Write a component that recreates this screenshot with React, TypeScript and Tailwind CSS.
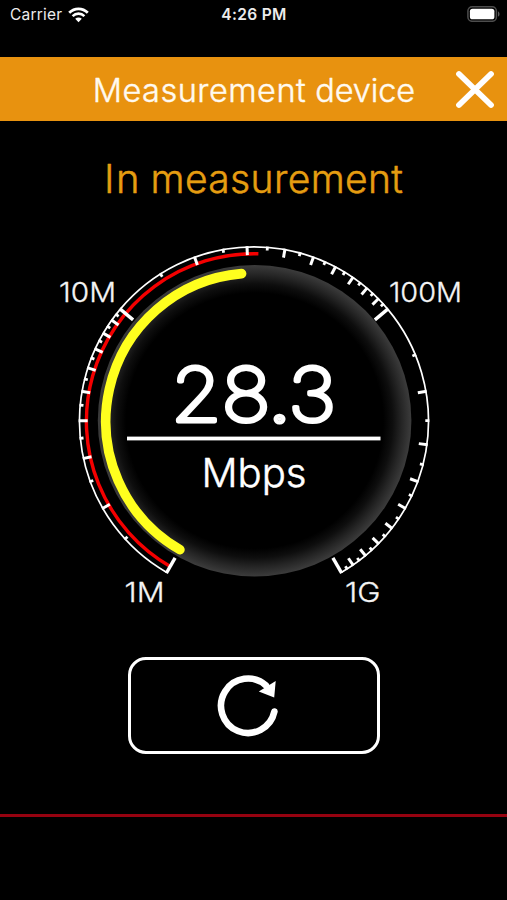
import React from "react";

const CX = 254;
const CY = 421.3;
const R = 174.5;

function point(r: number, deg: number): [number, number] {
  const a = (deg * Math.PI) / 180;
  return [CX + r * Math.sin(a), CY - r * Math.cos(a)];
}

function arc(r: number, from: number, to: number) {
  const [x1, y1] = point(r, from);
  const [x2, y2] = point(r, to);
  return `M${x1} ${y1}A${r} ${r} 0 ${to - from > 180 ? 1 : 0} 1 ${x2} ${y2}`;
}

// Logarithmic scale: three decades, 100 degrees each, starting at -150.
const angleOf = (mbps: number) => -150 + 100 * Math.log10(mbps);

type Tick = { angle: number; length: number; width: number };

const ticks: Tick[] = [];
for (const decade of [1, 10, 100]) {
  for (let half = 2; half < 20; half++) {
    const angle = angleOf((half / 2) * decade);
    if (half === 2) ticks.push({ angle, length: 17.5, width: 3.4 });
    else if (half % 2 === 0) ticks.push({ angle, length: 9, width: 3 });
    else ticks.push({ angle, length: 4, width: 2.8 });
  }
}
ticks.push({ angle: 150, length: 17.5, width: 3.4 });

type WordProps = {
  x: number;
  y: number;
  w: number;
  size: number;
  color?: string;
  stroke?: number;
  spaced?: boolean;
  children: string;
};

// A run of text fitted to the width w, by letter spacing or by stretching the glyphs.
function Word({ x, y, w, size, color = "#f4f4f4", stroke = 0.3, spaced = false, children }: WordProps) {
  return (
    <text
      x={x}
      y={y}
      fontSize={size}
      textLength={w}
      lengthAdjust={spaced ? "spacing" : "spacingAndGlyphs"}
      fill={color}
      stroke={color}
      strokeWidth={stroke}
      strokeLinejoin="round"
      fontWeight={300}
    >
      {children}
    </text>
  );
}

function Gauge() {
  return (
    <svg className="block h-[380px] w-[507px] shrink-0" viewBox="0 235 507 380" fontFamily="Inter, sans-serif">
      <defs>
        <radialGradient id="disk">
          <stop offset="0.82" stopColor="#000" />
          <stop offset="0.88" stopColor="#0e0e0e" />
          <stop offset="0.94" stopColor="#262626" />
          <stop offset="1" stopColor="#3c3c3c" />
        </radialGradient>
      </defs>
      <ellipse cx="254.6" cy="420.7" rx="156.8" ry="155.8" fill="url(#disk)" />
      <path d={arc(167.6, -150, 1.5)} fill="none" stroke="#f40000" strokeWidth="3.4" />
      <path d={arc(R, -150, 150)} fill="none" stroke="#fff" strokeWidth="1.7" />
      {ticks.map((t) => {
        const [x1, y1] = point(R + 0.8, t.angle);
        const [x2, y2] = point(R + 0.8 - t.length, t.angle);
        return <line key={t.angle} x1={x1} y1={y1} x2={x2} y2={y2} stroke="#fff" strokeWidth={t.width} />;
      })}
      <path d={arc(148.2, -150, -4.8)} fill="none" stroke="#ffff1e" strokeWidth="9.6" strokeLinecap="round" />
      <Word x={59} y={301.7} w={57} size={27.5}>10M</Word>
      <Word x={389} y={301.7} w={73} size={27.5}>100M</Word>
      <Word x={124.5} y={601.5} w={40} size={27.5}>1M</Word>
      <Word x={345} y={601.5} w={35.5} size={27.5}>1G</Word>
      <text
        x="171"
        y="420.8"
        fontSize="73.5"
        textLength="165"
        lengthAdjust="spacingAndGlyphs"
        fontWeight={100}
        fill="#fff"
        stroke="#fff"
        strokeWidth="4.8"
        strokeLinejoin="round"
      >
        28<tspan strokeWidth="7">.</tspan>3
      </text>
      <rect x="127" y="436.6" width="253.5" height="3.8" fill="#fff" />
      <Word x={201.5} y={486.5} w={105} size={40} color="#fff" stroke={0.5}>Mbps</Word>
    </svg>
  );
}

function StatusBar() {
  return (
    <div className="flex h-[57px] shrink-0 items-start justify-between pl-[10px] pr-[7px] pt-[5px] text-[15.5px] leading-[20px] text-[#ececec]">
      <div className="flex w-[160px] items-center gap-[6px]">
        <span className="tracking-[0.2px]">Carrier</span>
        <svg className="h-[16px] w-[21px]" viewBox="0 0 21 16">
          <path d="M1.2 5.8C6.5.6 14.5.6 19.8 5.8" fill="none" stroke="#fff" strokeWidth="2.8" />
          <path d="M4.6 9.1C8 5.8 13 5.8 16.4 9.1" fill="none" stroke="#fff" strokeWidth="2.6" />
          <path d="M7.2 11.8C9.2 10 11.8 10 13.8 11.8L10.5 15.2Z" fill="#fff" />
        </svg>
      </div>
      <span className="-ml-[2px] font-semibold tracking-[0.35px]">4:26 PM</span>
      <div className="flex w-[160px] justify-end">
        <svg className="h-[17px] w-[33px]" viewBox="0 0 33 17">
          <rect x="0.9" y="1.7" width="28.5" height="14.6" rx="4.3" fill="none" stroke="#4d4d4d" strokeWidth="1.5" />
          <rect x="2.9" y="3.7" width="24.5" height="10.6" rx="2.6" fill="#fff" />
          <path d="M31 6.4C33 7 33 11 31 11.6Z" fill="#5a5a5a" />
        </svg>
      </div>
    </div>
  );
}

export default function App() {
  return (
    <div className="flex h-[900px] w-[507px] flex-col overflow-hidden bg-black font-['Inter',sans-serif]">
      <StatusBar />
      <header className="flex h-16 shrink-0 items-center bg-[#e8920f] pl-[92px] pr-[11px]">
        <svg className="h-16 w-[324px]" viewBox="92 57 324 64" fontFamily="Inter, sans-serif">
          <Word x={92.7} y={101.5} w={213} size={32.5} color="#fffaf0" stroke={0.45} spaced>Measurement</Word>
          <Word x={315.3} y={101.5} w={99.7} size={32.5} color="#fffaf0" stroke={0.45} spaced>device</Word>
        </svg>
        <button className="ml-auto" aria-label="Close">
          <svg className="h-[40px] w-[42px]" viewBox="0 0 42 40">
            <path d="M5 5L37 36M37 5L5 36" stroke="#fff" strokeWidth="5.8" strokeLinecap="round" />
          </svg>
        </button>
      </header>
      <div className="flex h-[114px] shrink-0 justify-center">
        <svg className="h-[114px] w-[507px]" viewBox="0 121 507 114" fontFamily="Inter, sans-serif">
          <Word x={104} y={192.7} w={35.5} size={40} color="#e59d11" stroke={0.5} spaced>In</Word>
          <Word x={150.5} y={192.7} w={252.5} size={39} color="#e59d11" stroke={0.5} spaced>measurement</Word>
        </svg>
      </div>
      <Gauge />
      <button
        className="ml-[128px] mt-[42px] flex h-[97px] w-[252px] shrink-0 items-center rounded-[18px] border-[3px] border-white pl-[83px]"
        aria-label="Measure again"
      >
        <svg className="h-[66px] w-[68px]" viewBox="214 673 68 66">
          <path d="M274.4 711.5A27 27.2 0 1 1 266 685.5" fill="none" stroke="#fff" strokeWidth="6.6" strokeLinecap="round" />
          <path d="M275.7 681L258.8 691.5L274.2 697.6Z" fill="#fff" />
        </svg>
      </button>
      <div className="-mb-1 mt-[59.5px] h-[3px] shrink-0 bg-[#960210]" />
    </div>
  );
}
